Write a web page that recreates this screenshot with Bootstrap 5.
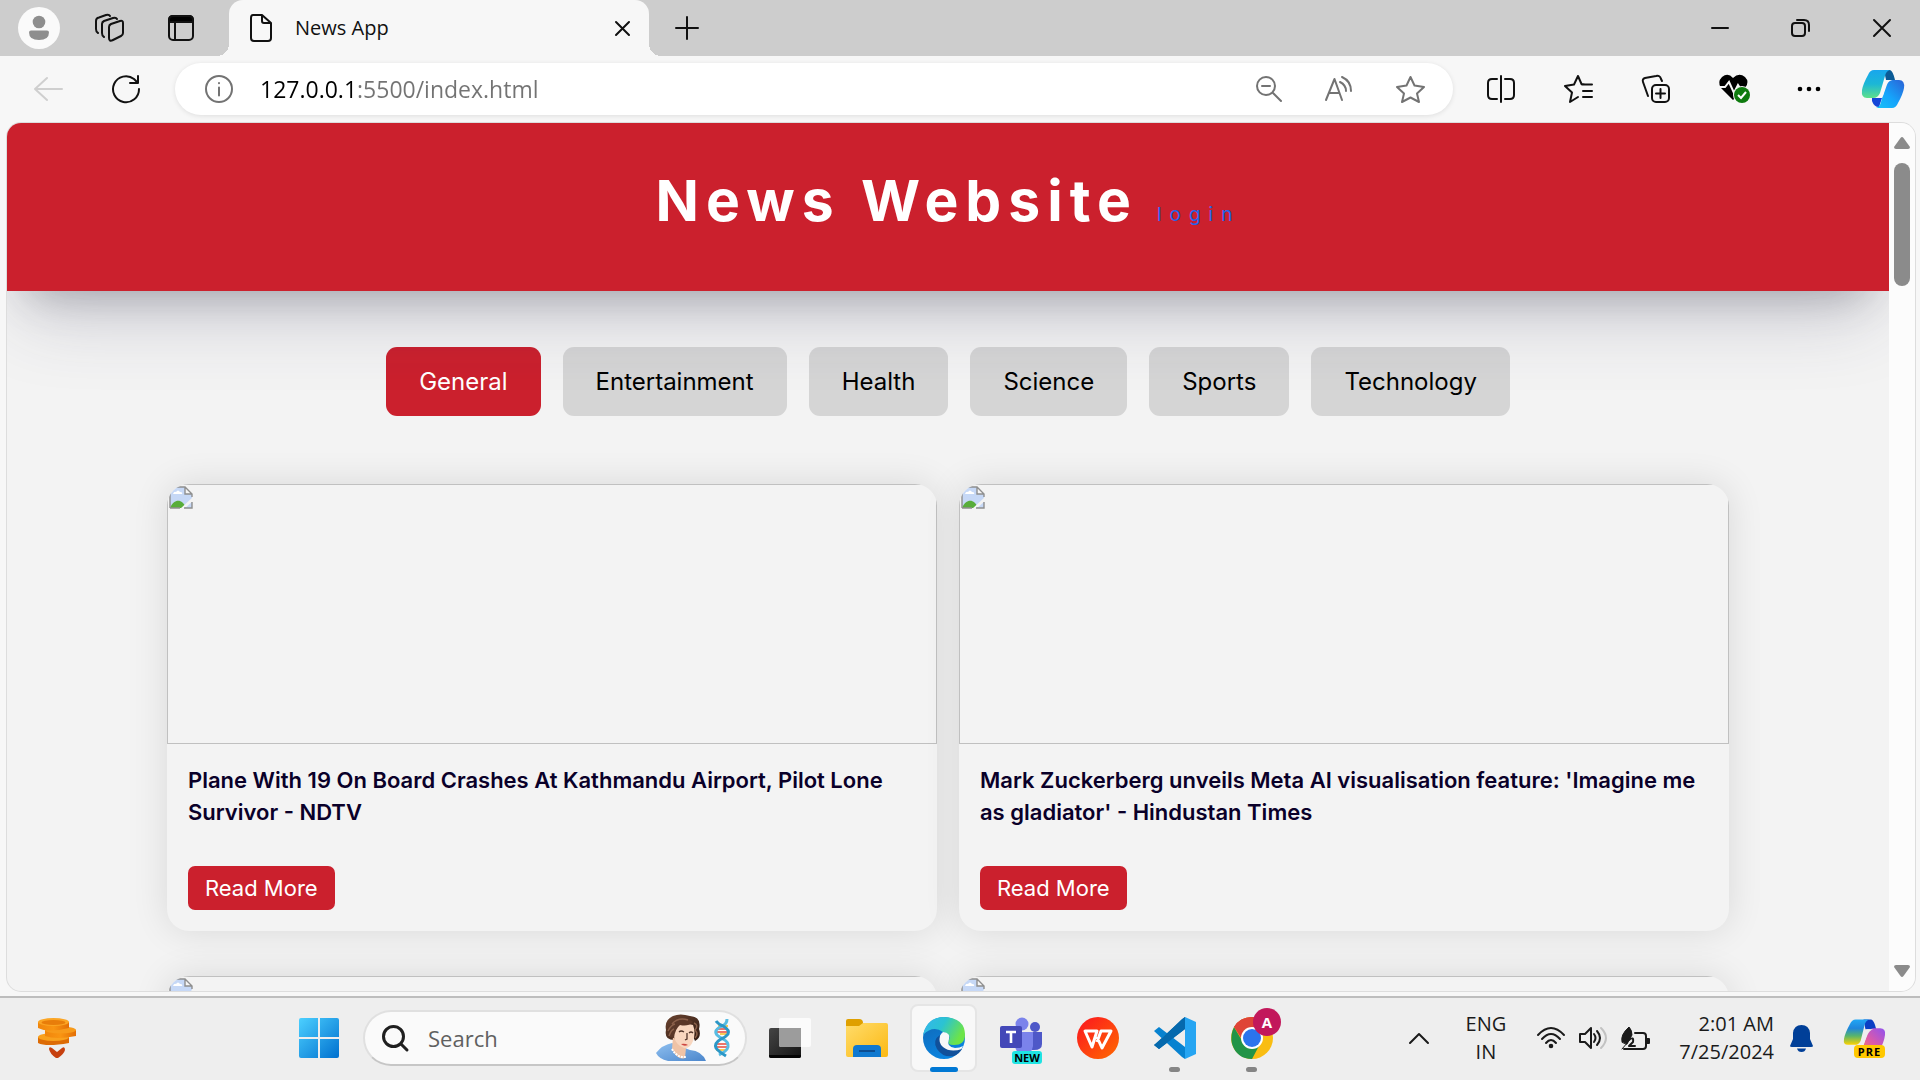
<!DOCTYPE html>
<html lang="en">
<head>
<meta charset="utf-8">
<meta name="viewport" content="width=device-width, initial-scale=1">
<title>News App</title>
<link href="https://cdn.jsdelivr.net/npm/bootstrap@5.3.0/dist/css/bootstrap.min.css" rel="stylesheet">
<style>
:root{--red:#cb202d;--ui:"Open Sans","Noto Sans",sans-serif;--site:Inter,"Open Sans",sans-serif}
body{font-family:var(--ui);background:#f7f7f7;color:#111;height:100vh;overflow:hidden}
svg{display:block;flex:none;overflow:visible}
.plain{border:0;background:none;padding:0;display:flex;align-items:center;justify-content:center;color:inherit;flex:none}
.ln{fill:none;stroke:currentColor;stroke-width:2;stroke-linecap:round;stroke-linejoin:round}
/* tab strip */
.strip{height:56px;background:#cdcdcd;padding-left:18px;padding-right:28px}
.avatar{width:42px;height:42px;border-radius:50%;background:#fafafa}
.left-tools{gap:35px;width:211px}
.tab{width:420px;height:56px;background:#f7f7f7;border-radius:14px 14px 0 0;position:relative;padding:0 19px 0 20px;gap:22px;font-size:20px}
.tab::before,.tab::after{content:"";position:absolute;bottom:0;width:12px;height:12px}
.tab::before{left:-12px;background:radial-gradient(circle at 0 0,#cdcdcd 12px,#f7f7f7 12px)}
.tab::after{right:-12px;background:radial-gradient(circle at 100% 0,#cdcdcd 12px,#f7f7f7 12px)}
.add{margin-left:26px}
.win{gap:62px}
/* toolbar */
.tools{height:67px;padding:0 16px 1px 34px}
.omni{height:52px;border-radius:26px;background:#fff;box-shadow:0 1px 5px rgba(0,0,0,.1);margin-left:34px;padding:0 28px 0 30px;color:#737373;gap:27px}
.url{border:0;outline:0;font-size:23px;line-height:32px;padding:0;color:#6f6f6f;background:linear-gradient(90deg,#000 97px,#737373 97px);-webkit-background-clip:text;background-clip:text;-webkit-text-fill-color:transparent;min-width:0}
.omni-tools{gap:43px}
.side-tools{gap:49px;padding-left:34px}
.pilot{margin-left:-8px}
/* page area */
.frame{margin:0 5px 5px 7px;border-radius:14px;background:#f3f3f3;overflow:hidden;box-shadow:0 0 0 1px #ddd;min-height:0}
.site{font-family:var(--site);overflow:hidden;min-width:0}
.site-head{height:168px;background:var(--red);position:relative;z-index:2;padding-top:42px;box-shadow:0 38px 76px -15px rgba(50,50,93,.22),0 22px 44px -22px rgba(0,0,0,.26);flex:none}
.site-head h1{font-size:57px;line-height:72px;font-weight:700;color:#fff;letter-spacing:7px;margin:0 19px 0 0}
.login{font-size:19px;letter-spacing:8px;color:#2265ee;text-decoration:none}
.cats{gap:22px;padding-top:56px;flex:none}
.cat{border:0;border-radius:11px;background:#d5d5d5;color:#000;height:69px;padding:0 33px;font-size:24px}
.cat.on{background:var(--red);color:#fff}
.news{width:83%;margin:68px auto 0;display:grid;grid-template-columns:1fr 1fr;gap:45px 22px;flex:none}
.story{border-radius:22px;overflow:hidden;background:#f3f3f3;box-shadow:0 0 36px rgba(0,0,0,.11)}
.pic{height:260px;border:1px solid #c0c0c0;padding:1px}
.story-body{padding:20px 21px 21px}
.story h2{font-size:22px;line-height:32px;font-weight:600;color:#0a0029;margin:0 0 38px}
.more{display:inline-block;background:var(--red);color:#fff;text-decoration:none;border-radius:7px;font-size:22px;line-height:44px;padding:0 17px;vertical-align:top}
.scroll{width:26px;background:#fcfcfc;padding:14px 0;flex:none}
.thumb{width:16px;height:123px;border-radius:8px;background:#8b8b8b;margin-top:14px}
/* taskbar */
.task{height:84px;background:#eee;border-top:2px solid #bdbdbd;padding:0 35px 2px 36px;flex:none}
.start{margin:0 24px 0 221px}
.find{width:384px;height:56px;border-radius:28px;background:#fafafa;border:2px solid #e0e0e0;border-bottom-color:#c6c6c6;padding:0 15px 0 17px}
.find input{border:0;outline:0;background:none;font-size:22px;line-height:30px;color:#5c5c5c;padding:0;margin-left:19px;min-width:0}
.find input::placeholder{color:#606060;opacity:1}
.slot{width:77px;height:68px;position:relative}
.slot.here::before{content:"";position:absolute;inset:0 5px;background:#f8f8f8;border:2px solid #e5e5e5;border-radius:8px}
.slot svg{position:relative}
.slot i{position:absolute;bottom:0;width:11px;height:5px;border-radius:3px;background:#858585}
.slot.here i{width:28px;background:#0078d4}
.new-tag,.pre-tag,.who{position:absolute;font-weight:700;color:#000;text-align:center}
.new-tag{left:30px;top:47px;width:30px;font-size:11px;line-height:13px;border-radius:3px;background:#1fe3e3}
.who{left:40px;top:4px;width:28px;height:28px;line-height:28px;border-radius:50%;background:#c2185b;color:#fff;font-size:15px}
.pre-tag{left:10px;top:27px;width:31px;font-size:11px;line-height:13px;border-radius:4px;background:#ffc800;letter-spacing:1px}
.tray{color:#1a1a1a;font-size:20px;line-height:28px}
.lang{margin:0 31px 0 37px}
.vol{margin:0 14px}
.clock{margin:0 16px 0 29px}
.pre{margin-left:31px;position:relative}
.off{color:#cfcfcf}
</style>
<script src="https://cdn.jsdelivr.net/npm/bootstrap@5.3.0/dist/js/bootstrap.bundle.min.js"></script>
</head>
<body class="d-flex flex-column">
<svg width="0" height="0" class="position-absolute" aria-hidden="true">
<defs>
<linearGradient id="gw" x1="0" y1="0" x2="1" y2="1"><stop stop-color="#4cd0ff"/><stop offset="1" stop-color="#0070cf"/></linearGradient>
<linearGradient id="gc1" x1="0" y1="0" x2="0" y2="1"><stop stop-color="#18a6ee"/><stop offset=".5" stop-color="#1cb7d6"/><stop offset="1" stop-color="#5ee08a"/></linearGradient>
<linearGradient id="gc2" x1="1" y1="0" x2="0" y2="1"><stop stop-color="#2b62d6"/><stop offset=".55" stop-color="#15a4fb"/><stop offset="1" stop-color="#19c3f7"/></linearGradient>
<linearGradient id="gp1" x1="0" y1="0" x2="0" y2="1"><stop stop-color="#20a7f5"/><stop offset=".35" stop-color="#1f86dc"/><stop offset=".65" stop-color="#58b56b"/><stop offset="1" stop-color="#ffd200"/></linearGradient>
<linearGradient id="gp2" x1="1" y1="0" x2="0" y2="1"><stop stop-color="#9052f0"/><stop offset=".5" stop-color="#dc5aa8"/><stop offset="1" stop-color="#ff8a4a"/></linearGradient>
<linearGradient id="ge1" x1="0" y1="0" x2="1" y2=".4"><stop stop-color="#35b5ef"/><stop offset=".5" stop-color="#2bc3d2"/><stop offset="1" stop-color="#6de447"/></linearGradient>
<linearGradient id="ge2" x1="0" y1="0" x2=".5" y2="1"><stop stop-color="#1167b5"/><stop offset="1" stop-color="#0a84e0"/></linearGradient>
<linearGradient id="gf" x1="0" y1="0" x2="1" y2="1"><stop stop-color="#ffdc6b"/><stop offset="1" stop-color="#fcb913"/></linearGradient>
<linearGradient id="go" x1="0" y1="0" x2="1" y2="0"><stop stop-color="#f0850c"/><stop offset=".5" stop-color="#f99512"/><stop offset="1" stop-color="#e36e05"/></linearGradient>
<linearGradient id="gwps" x1="0" y1="0" x2="1" y2="1"><stop stop-color="#fb1420"/><stop offset="1" stop-color="#ff6a00"/></linearGradient>
<linearGradient id="gd" x1="0" y1="0" x2="1" y2="1"><stop stop-color="#454545"/><stop offset="1" stop-color="#141414"/></linearGradient>
<linearGradient id="gs" x1="0" y1="0" x2="1" y2="1"><stop stop-color="#8fc0f0"/><stop offset="1" stop-color="#4b86cc"/></linearGradient>
<linearGradient id="gh" x1="0" y1="0" x2="1" y2="1"><stop stop-color="#6b4430"/><stop offset="1" stop-color="#2f1a12"/></linearGradient>
<symbol id="broken" viewBox="0 0 24 23"><path d="M1 1H16L23 8V22H1Z" fill="#c6d8f6"/><path d="M1 22C5 13 13 12 17 22Z" fill="#58ad3a"/><path d="M4 8q1-3 3-2q2-3 4 0q3 0 2 2Z" fill="#fff"/><path d="M16 1V8H23Z" fill="#f6f6f6"/><path d="M11 23L24 11V15L15 23Z" fill="#f3f3f3"/><path d="M1 22V1H16L23 8V11M16 1V8H23M1 22H11M15 22H23V16" fill="none" stroke="#8e8e8e" stroke-width="1.4"/></symbol>
</defs></svg>

<header class="strip d-flex align-items-center flex-shrink-0">
  <div class="left-tools d-flex align-items-center flex-shrink-0">
    <button class="plain avatar" aria-label="Profile"><svg width="20" height="24" viewBox="0 0 20 24" fill="#8e8e8e"><circle cx="10" cy="6" r="6.3"/><path d="M2 14.500H18Q20 14.500 20 16.500Q20 24 10 24Q0 24 0 16.500Q0 14.500 2 14.500Z"/></svg></button>
    <button class="plain" aria-label="Workspaces"><svg width="30" height="28" viewBox="0 0 30 28" class="ln"><path d="M16 10L25 7Q28 6 28 9V19Q28 21 26 22L18 26Q14 28 14 24V13Q14 11 16 10Z"/><path d="M9 23Q7 22 7 19V10Q7 8 9 7L18 4Q21 3 22 5M3 19Q1 18 1 15V7Q1 4 4 3.500L11 1Q14 0 15 2"/></svg></button>
    <button class="plain ms-2" aria-label="Tab actions"><svg width="26" height="26" viewBox="0 0 26 26" class="ln"><rect x="1" y="1" width="24" height="24" rx="4"/><path d="M1 7V5Q1 1 5 1H21Q25 1 25 5V7Z" fill="#000"/><path d="M7 7V25"/></svg></button>
  </div>
  <div class="tab d-flex align-items-center flex-shrink-0">
    <svg width="24" height="28" viewBox="0 0 24 28" class="ln"><path d="M4 1H13L22 9V24Q22 27 19 27H5Q2 27 2 24V4Q2 1 4 1ZM13 1V7Q13 9 15 9H22"/></svg>
    <span>News App</span>
    <button class="plain ms-auto" aria-label="Close tab"><svg width="15" height="15" viewBox="0 0 15 15" class="ln"><path d="M1 1L14 14M14 1L1 14"/></svg></button>
  </div>
  <button class="plain add" aria-label="New tab"><svg width="24" height="24" viewBox="0 0 24 24" class="ln"><path d="M12 1V23M1 12H23"/></svg></button>
  <div class="win d-flex align-items-center ms-auto">
    <button class="plain" aria-label="Minimise"><svg width="18" height="18" viewBox="0 0 18 18" class="ln"><path d="M1 9H17"/></svg></button>
    <button class="plain" aria-label="Restore"><svg width="19" height="18" viewBox="0 0 19 18" class="ln"><rect x="1" y="4" width="13" height="13" rx="3"/><path d="M6 1H13Q18 1 18 6V12"/></svg></button>
    <button class="plain" aria-label="Close"><svg width="20" height="18" viewBox="0 0 20 18" class="ln"><path d="M2 1L18 17M18 1L2 17"/></svg></button>
  </div>
</header>

<nav class="tools d-flex align-items-center flex-shrink-0">
  <button class="plain off" aria-label="Back"><svg width="29" height="24" viewBox="0 0 29 24" class="ln"><path d="M28 12H1M13 1L1 12L13 23"/></svg></button>
  <button class="plain ms-5" aria-label="Reload"><svg width="30" height="28" viewBox="0 0 30 28" class="ln"><path d="M28 14A13 13 0 1 1 23 4L27 8M27 1V8H19"/></svg></button>
  <div class="omni d-flex align-items-center flex-grow-1">
    <svg width="28" height="28" viewBox="0 0 28 28" class="ln"><circle cx="14" cy="14" r="13"/><path d="M14 12.500V20.500M14 8V8.300"/></svg>
    <input class="url flex-grow-1" aria-label="Address" value="127.0.0.1:5500/index.html">
    <div class="omni-tools d-flex align-items-center">
      <button class="plain" aria-label="Zoom"><svg width="26" height="26" viewBox="0 0 26 26" class="ln"><circle cx="10" cy="10" r="9"/><path d="M17 17L25 25M6 10H14"/></svg></button>
      <button class="plain" aria-label="Read aloud"><svg width="28" height="26" viewBox="0 0 28 26" class="ln"><path d="M1 24L9.500 3L17 24M4 17H14.500M17 1Q26 5 26 15M15 6Q21 9 21 15"/></svg></button>
      <button class="plain" aria-label="Favourite"><svg width="29" height="27" viewBox="0 0 29 27" class="ln"><path d="M14.500 1L18.500 9.500L28 11L21 17.500L23 26L14.500 21.500L6 26L8 17.500L1 11L10.500 9.500Z"/></svg></button>
    </div>
  </div>
  <div class="side-tools d-flex align-items-center">
    <button class="plain" aria-label="Split screen"><svg width="28" height="28" viewBox="0 0 28 28" class="ln"><path d="M10 4H5Q1 4 1 8V20Q1 24 5 24H10M18 4H23Q27 4 27 8V20Q27 24 23 24H18M14 1V27"/></svg></button>
    <button class="plain" aria-label="Favourites"><svg width="29" height="28" viewBox="0 0 29 28" class="ln"><path d="M21 9.500L17.500 9L14 1L10 9.500L1 11L8 17.500L6 27L14 22M18 9.500L28 9.500M19 16H28M19 22H28"/></svg></button>
    <button class="plain" aria-label="Collections"><svg width="28" height="28" viewBox="0 0 28 28" class="ln"><rect x="10" y="10" width="17" height="17" rx="4"/><path d="M18.500 14V23M14 18.500H23M6 21L1 7Q0 4 3 3L14 1Q18 0 19 4L20 6"/></svg></button>
    <button class="plain" aria-label="Browser essentials"><svg width="29" height="30" viewBox="0 0 29 30"><path d="M14 26L2 14Q-2 8 3 3Q9-2 14 4Q20-2 26 3Q31 8 26 14Z" fill="#000"/><path d="M0 13H6L10 8L15 19L19 11L21 14H30" fill="none" stroke="#f7f7f7" stroke-width="2"/><circle cx="23" cy="21" r="9" fill="#f7f7f7"/><circle cx="23" cy="21" r="8" fill="#0f7b0f"/><path d="M19 21L22 24L27 18" fill="none" stroke="#fff" stroke-width="2"/></svg></button>
    <button class="plain" aria-label="Menu"><svg width="24" height="6" viewBox="0 0 24 6"><circle cx="3" cy="3" r="2.300"/><circle cx="12" cy="3" r="2.300"/><circle cx="21" cy="3" r="2.300"/></svg></button>
    <button class="plain pilot" aria-label="Copilot"><svg width="42" height="38" viewBox="0 0 42 38"><path d="M22 0H28Q31 1 33 10H24Z" fill="#0b5b96"/><path d="M10 28H20L17 37Q12 37 10 31Z" fill="#1546d8"/><path d="M12 0H28Q24 1 23 6L18 23Q16 28 11 28H5Q-1 28 0 20Q1 14 6 5Q8 0 12 0Z" fill="url(#gc1)"/><path d="M30 38H14Q18 37 19 32L24 15Q26 10 31 10H37Q43 10 42 18Q41 24 36 33Q34 38 30 38Z" fill="url(#gc2)"/><path d="M24 10H30Q26 11 24.500 16L21 26Q20 28 17 28H15Q18 27 19 23Z" fill="#f7f7f7"/></svg></button>
  </div>
</nav>

<section class="frame d-flex flex-grow-1">
  <main class="site d-flex flex-column flex-grow-1">
    <div class="site-head d-flex justify-content-center align-items-baseline">
      <h1>News Website</h1><a class="login" href="#">login</a>
    </div>
    <nav class="cats d-flex justify-content-center">
      <button class="cat on">General</button>
      <button class="cat">Entertainment</button>
      <button class="cat">Health</button>
      <button class="cat">Science</button>
      <button class="cat">Sports</button>
      <button class="cat">Technology</button>
    </nav>
    <div class="news">
      <article class="story">
        <div class="pic"><svg width="24" height="23"><use href="#broken"/></svg></div>
        <div class="story-body"><h2>Plane With 19 On Board Crashes At Kathmandu Airport, Pilot Lone Survivor - NDTV</h2><a class="more" href="#">Read More</a></div>
      </article>
      <article class="story">
        <div class="pic"><svg width="24" height="23"><use href="#broken"/></svg></div>
        <div class="story-body"><h2>Mark Zuckerberg unveils Meta AI visualisation feature: 'Imagine me as gladiator' - Hindustan Times</h2><a class="more" href="#">Read More</a></div>
      </article>
      <article class="story"><div class="pic"><svg width="24" height="23"><use href="#broken"/></svg></div></article>
      <article class="story"><div class="pic"><svg width="24" height="23"><use href="#broken"/></svg></div></article>
    </div>
  </main>
  <div class="scroll d-flex flex-column align-items-center">
    <svg width="16" height="12" viewBox="0 0 16 12" fill="#8b8b8b"><path d="M6.500 1Q8-1 9.500 1L16 10Q16 12 14 12H2Q0 12 0 10Z"/></svg>
    <div class="thumb"></div>
    <svg class="mt-auto" width="16" height="12" viewBox="0 0 16 12" fill="#8b8b8b"><path d="M6.500 11Q8 13 9.500 11L16 2Q16 0 14 0H2Q0 0 0 2Z"/></svg>
  </div>
</section>

<footer class="task d-flex align-items-center">
  <button class="plain" aria-label="Widgets"><svg width="42" height="40" viewBox="0 0 42 40"><path d="M2 19V25Q10 29 33 25V19Z" fill="#dd6b05"/><ellipse cx="17.500" cy="19" rx="15.500" ry="4" fill="#f9a11d"/><path d="M9 12V18Q20 22 40 18V12Z" fill="url(#go)"/><ellipse cx="24.500" cy="12" rx="15.500" ry="3.500" fill="#f79a1a"/><path d="M2 4V10Q12 15 33 10V4Z" fill="url(#go)"/><ellipse cx="17.500" cy="4" rx="15.500" ry="4" fill="#fba524"/><ellipse cx="17.500" cy="4.500" rx="12" ry="2.500" fill="#e87d0a"/><path d="M13 31Q13 28 16 30L21 34L26 30Q29 28 29 32Q28 36 22 40H20Q14 36 13 31Z" fill="#c6400f"/></svg></button>
  <button class="plain start" aria-label="Start"><svg width="40" height="40" viewBox="0 0 40 40"><path d="M2 0H19V19H0V2Q0 0 2 0ZM21 0H38Q40 0 40 2V19H21ZM0 21H19V40H2Q0 40 0 38ZM21 21H40V38Q40 40 38 40H21Z" fill="url(#gw)"/></svg></button>
  <label class="find d-flex align-items-center flex-shrink-0">
    <svg width="27" height="27" viewBox="0 0 27 27" fill="none" stroke="#1f1f1f" stroke-width="3" stroke-linecap="round"><circle cx="11.500" cy="11.500" r="10"/><path d="M19 19L25 25"/></svg>
    <input class="flex-grow-1" type="text" placeholder="Search" aria-label="Search">
    <svg width="50" height="46" viewBox="0 0 50 46"><path d="M10 15Q8 5 17 1Q24-2 34 1Q46 2 43 14Q46 22 39 26L33 12L18 25Q8 25 10 15Z" fill="url(#gh)"/><path d="M0 38Q6 30 16 28L34 35Q46 36 50 46H12Q3 44 0 38Z" fill="url(#gs)"/><path d="M17 22L16 34Q22 46 29 43L30 33Z" fill="#efc3a6"/><path d="M18 12Q24 6 37 10Q40 18 37 26Q34 34 28 33Q20 30 18 22Z" fill="#f8d6bf"/><path d="M14 22Q13 10 19 5Q27-1 37 7Q32 12 24 10Q19 14 18 23Z" fill="#5a3728"/><path d="M16 9Q22 2 32 5M12 16Q15 10 19 9M13 21Q15 15 18 14M38 8Q43 10 39 15Q43 19 39 23" fill="none" stroke="#8b604a" stroke-width="1.500"/><path d="M23 17Q25 15 28 17M33 18Q35 16 37 18M31 18L31 24L29 25" fill="none" stroke="#50342a" stroke-width="1.300"/><path d="M25 29Q29 28 32 30Q28 32 25 29" fill="#cd4742"/><path d="M16 34Q21 43 30 42" fill="none" stroke="#fff" stroke-width="2" stroke-dasharray="2 1"/></svg>
    <svg class="ms-2" width="16" height="38" viewBox="0 0 16 38" fill="none"><path d="M2 10H14M3 13H14M3 25H13M2 28H13" stroke="#e74a3b" stroke-width="1.500"/><path d="M4 7H14M6 15H13M2 31H13" stroke="#f5bc21" stroke-width="1.500"/><path d="M13 0Q13 5 8 7Q-1 11 3 16Q5 18 9 20Q15 23 14 28Q13 32 5 36" stroke="#58bce2" stroke-width="3"/><path d="M2 2Q4 5 9 7Q16 11 14 15Q12 18 7 20Q0 24 2 29Q4 32 12 37" stroke="#2b97c7" stroke-width="3"/></svg>
  </label>
  <div class="d-flex align-items-center ms-1">
    <button class="plain slot" aria-label="Task view"><svg width="42" height="40" viewBox="0 0 42 40"><rect y="10" width="32" height="30" rx="2" fill="url(#gd)"/><path d="M0 37H32V38Q32 40 30 40H2Q0 40 0 38Z" fill="#050505"/><rect x="10" y="0" width="32" height="29" rx="2" fill="#fff" opacity=".75"/><path d="M10 10H32V29H12Q10 29 10 27Z" fill="#9c9c9c"/></svg></button>
    <button class="plain slot" aria-label="File Explorer"><svg width="42" height="38" viewBox="0 0 42 38"><path d="M0 2Q0 0 2 0H13Q17 0 17 4V9H0Z" fill="#dfa000"/><path d="M0 7H13L17 4H40Q42 4 42 6V36Q42 38 40 38H2Q0 38 0 36Z" fill="url(#gf)"/><path d="M7 38V30Q7 26 11 26H31Q35 26 35 30V38Z" fill="#0f79d0"/><path d="M13 32H29" stroke="#0b4d91" stroke-width="2"/></svg></button>
    <button class="plain slot here" aria-label="Edge"><svg width="42" height="42" viewBox="0 0 42 42"><circle cx="21" cy="21" r="21" fill="url(#ge2)"/><path d="M0 18Q4 0 21 0Q42 1 42 18Q42 28 31 28Q23 28 26 23Q29 17 20 15Q10 8 0 18Z" fill="url(#ge1)"/><path d="M20 15Q28 16 26 22Q23 30 32 31Q37 31 40 29Q38 34 34 37Q17 37 16 24Q16 18 20 15Z" fill="#f8f8f8"/><path d="M17 18Q9 23 14 32Q20 41 31 39Q36 37 39 32Q27 36 20 30Q15 26 17 18Z" fill="#11509a"/></svg><i></i></button>
    <button class="plain slot" aria-label="Teams"><svg width="42" height="40" viewBox="0 0 42 40"><circle cx="35" cy="9" r="5" fill="#4e58c8"/><circle cx="22" cy="6" r="6.500" fill="#7b83eb"/><path d="M28 14H42V26Q42 32 34 32H28Z" fill="#4e58c8"/><path d="M15 14H33V28Q32 36 24 36Q15 36 15 26Z" fill="#7b83eb"/><rect y="8" width="22" height="22" rx="2" fill="#4348b8"/><path d="M6 14H16M11 14V25" stroke="#fff" stroke-width="2.600"/></svg><span class="new-tag">NEW</span></button>
    <button class="plain slot" aria-label="WPS Office"><svg width="42" height="42" viewBox="0 0 42 42"><circle cx="21" cy="21" r="21" fill="url(#gwps)"/><path d="M8 14H20L15 30Z M20 20L25 31L34 14H24L20 25" fill="none" stroke="#fff" stroke-width="3" stroke-linejoin="round"/></svg></button>
    <button class="plain slot" aria-label="VS Code"><svg width="42" height="42" viewBox="0 0 42 42"><path d="M0 28L5 32L31 12V0Z" fill="#0469ae"/><path d="M0 14L5 10L31 30V42L28 40Z" fill="#0782d0"/><path d="M31 0L42 5V37L31 42Z" fill="#26a5f2"/><path d="M31 0L28 2L3 26L0 28L5 32L31 12Z" fill="#0569ad"/></svg><i></i></button>
    <button class="plain slot" aria-label="Chrome"><svg width="42" height="42" viewBox="0 0 42 42"><circle cx="21" cy="21" r="21" fill="#f9bd12"/><path d="M3 10Q9 0 21 0Q34 0 40 12H21Z" fill="#df4437"/><path d="M3 10L13 27L21 31L29 27L21 42Q6 42 1 27Q-1 18 3 10Z" fill="#229447"/><path d="M3 10Q9 0 21 0Q34 0 40 11H21L12 24Z" fill="#df4437"/><circle cx="21" cy="21" r="11" fill="#fff"/><circle cx="21" cy="21" r="9" fill="#2b74ed"/></svg><span class="who">A</span><i></i></button>
  </div>
  <div class="tray d-flex align-items-center ms-auto">
    <button class="plain" aria-label="Hidden icons"><svg width="20" height="12" viewBox="0 0 20 12" class="ln"><path d="M1 11L10 2L19 11"/></svg></button>
    <div class="lang text-center">ENG<br>IN</div>
    <button class="plain" aria-label="Network"><svg width="28" height="22" viewBox="0 0 28 22" class="ln"><path d="M1 8Q14-6 27 8M5 12Q14 2 23 12M9 16Q14 10 19 16"/><circle cx="14" cy="19" r="1.300" fill="#1a1a1a"/></svg></button>
    <button class="plain vol" aria-label="Volume"><svg width="28" height="24" viewBox="0 0 28 24" class="ln"><path d="M1 8H6L12 2V22L6 16H1ZM15 8Q18 12 15 16M18 5Q24 12 18 19"/><path d="M22 2Q32 12 22 22" stroke="#c2c2c2"/></svg></button>
    <button class="plain" aria-label="Battery"><svg width="29" height="26" viewBox="0 0 29 26" class="ln"><path d="M14 8H22Q25 8 25 11V21Q25 24 22 24H3"/><path d="M26 14H28V18H26Z" fill="#1a1a1a"/><path d="M1 17Q-1 10 8 2Q11 5 11 10L6 19ZM7 17L1 24" fill="#1a1a1a" stroke-width="1"/><path d="M8 15Q13 11 12 17L8 21H14"/></svg></button>
    <div class="clock text-end">2:01 AM<br>7/25/2024</div>
    <button class="plain" aria-label="Notifications"><svg width="23" height="27" viewBox="0 0 23 27" fill="#003f98"><path d="M11.500 0Q19 0 20 8V14L23 21Q23 22 21 22H2Q0 22 0 21L3 14V8Q4 0 11.500 0ZM7 23.500H16Q15 27 11.500 27Q8 27 7 23.500Z"/></svg></button>
    <button class="plain pre" aria-label="Copilot preview"><svg width="41" height="40" viewBox="0 0 42 38"><path d="M20 0H28Q31 1 33 10H22Z" fill="#0a3fc4"/><path d="M12 0H26Q22 1 21 6L17 22Q15 26 11 26H4Q-1 26 0 20Q1 14 6 5Q8 0 12 0Z" fill="url(#gp1)"/><path d="M30 36H14Q18 35 19 30L24 14Q26 9 31 9H37Q43 9 42 16Q41 24 36 32Q34 36 30 36Z" fill="url(#gp2)"/><path d="M23 10H30Q26 11 24 16L20 26H15Q18 25 19 22Z" fill="#eee"/></svg><span class="pre-tag">PRE</span></button>
  </div>
</footer>
</body>
</html>
